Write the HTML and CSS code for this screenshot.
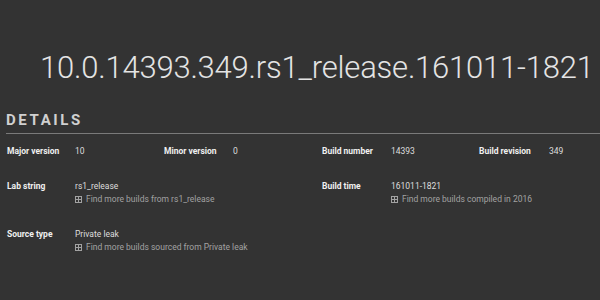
FILE: index.html
```html
<!DOCTYPE html>
<html lang="en">
<head>
    <meta charset="UTF-8">
    <title>10.0.14393.349.rs1_release.161011-1821</title>
    <link rel="stylesheet" href="styles.css">
</head>
<body>
    <h1 class="build-title">10.0.14393.349.rs1_release.161011-1821</h1>

    <h2 class="section-head">Details</h2>

    <div class="details">
        <div class="label">Major version</div>
        <div class="value">10</div>
        <div class="label">Minor version</div>
        <div class="value">0</div>
        <div class="label">Build number</div>
        <div class="value">14393</div>
        <div class="label">Build revision</div>
        <div class="value">349</div>

        <div class="label">Lab string</div>
        <div class="value wide">
            rs1_release
            <a class="more" href="#"><span class="plus"></span>Find more builds from rs1_release</a>
        </div>
        <div class="label">Build time</div>
        <div class="value wide">
            161011-1821
            <a class="more" href="#"><span class="plus"></span>Find more builds compiled in 2016</a>
        </div>

        <div class="label">Source type</div>
        <div class="value wide">
            Private leak
            <a class="more" href="#"><span class="plus"></span>Find more builds sourced from Private leak</a>
        </div>
    </div>
</body>
</html>
```
FILE: styles.css
```css
body {
    margin: 0;
    padding: 0 0 0 6px;
    background-color: #333333;
    color: #dddddd;
    font-family: Roboto, 'Liberation Sans', sans-serif;
    overflow: hidden;
}

/* big build string */
.build-title {
    margin: 0;
    padding: 48px 0 0 34px;
    font-size: 31px;
    font-weight: 300;
    letter-spacing: -0.2px;
    line-height: 40px;
    color: #e4e4e4;
    white-space: nowrap;
}

.section-head {
    margin: 24px 0 0;
    padding-bottom: 4px;
    border-bottom: 1px solid #7a7a7a;
    font-size: 15px;
    font-weight: 700;
    letter-spacing: 2.6px;
    text-transform: uppercase;
    color: #d0d0d0;
    line-height: 17px;
}

/* label / value table */
.details {
    display: grid;
    grid-template-columns: 68px 89px 69px 89px 69px 88px 70px 60px;
    row-gap: 25px;
    padding: 12px 0 0 1px;
    font-size: 8.5px;
    line-height: 10px;
}
.label {
    font-weight: 700;
    color: #f0f0f0;
}
.value {
    color: #dddddd;
}
.wide {
    grid-column: span 3;
}
.more {
    display: flex;
    align-items: center;
    gap: 4px;
    margin-top: 3px;
    color: #a2a2a2;
    text-decoration: none;
}
.plus {
    width: 5px;
    height: 5px;
    border: 1px solid #a2a2a2;
    background:
        linear-gradient(#a2a2a2, #a2a2a2) center / 5px 1px no-repeat,
        linear-gradient(#a2a2a2, #a2a2a2) center / 1px 5px no-repeat;
}
```
